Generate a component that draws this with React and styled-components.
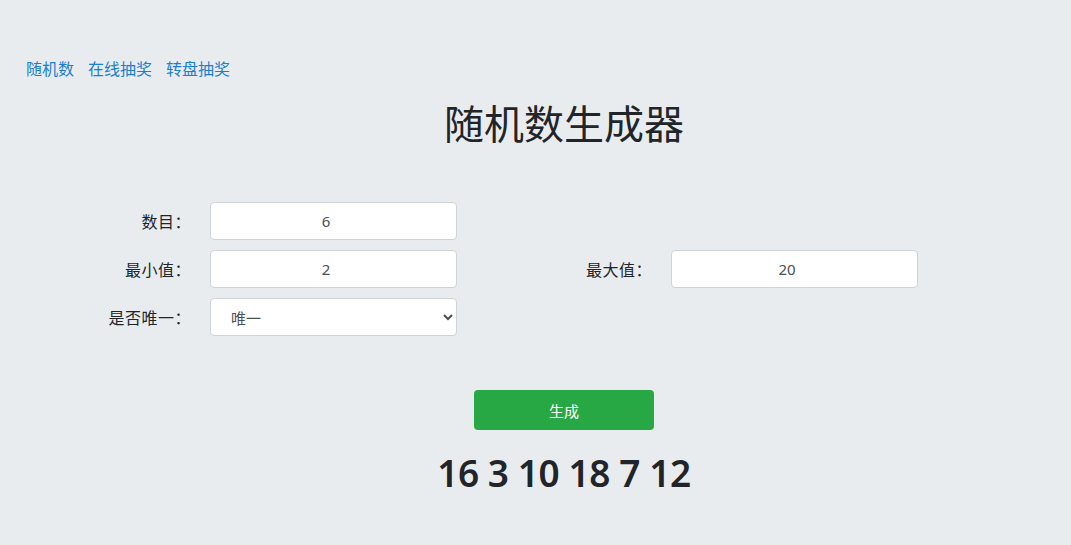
import React, { useState } from 'react';
import styled, { createGlobalStyle } from 'styled-components';

const GlobalStyle = createGlobalStyle`
    html, body {
        margin: 0;
        padding: 0;
        background: #e9ecef;
    }
    body {
        font-family: "Noto Sans", "Noto Sans CJK SC", sans-serif;
        color: #212529;
        font-size: 15px;
    }
`

const Page = styled.div`
    padding-top: 57px;
`

const Nav = styled.nav`
    display: flex;
    gap: 14px;
    padding-left: 26px;
    a {
        color: #1a7fd0;
        text-decoration: none;
        font-size: 16px;
        line-height: 22px;
        font-family: "Noto Sans CJK SC", sans-serif;
    }
`

const Title = styled.h1`
    margin: 13px 0 0;
    text-align: center;
    font-weight: 400;
    font-size: 40px;
    line-height: 60px;
    font-family: "Noto Sans CJK SC", sans-serif;
    color: #212529;
    padding-left: 57px;
`

const Form = styled.div`
    margin-top: 50px;
    display: grid;
    grid-template-columns: 195px 277px 184px 277px;
    row-gap: 10px;
`

const Label = styled.label`
    padding: 0 4px 0 0;
    text-align: right;
    line-height: 38px;
    font-size: 16px;
    letter-spacing: 0.5px;
    font-family: "Noto Sans CJK SC", sans-serif;
    color: #212529;
`

const Cell = styled.div`
    padding: 0 15px;
`

const Input = styled.input`
    box-sizing: border-box;
    width: 100%;
    height: 38px;
    border: 1px solid #ced4da;
    border-radius: 4px;
    background: #fff;
    padding: 0 15px 0 0;
    text-align: center;
    font-size: 15px;
    font-family: "Noto Sans", sans-serif;
    color: #495057;
    outline: none;
`

const Select = styled.select`
    box-sizing: border-box;
    width: 100%;
    height: 38px;
    border: 1px solid #ced4da;
    border-radius: 4px;
    background: #fff;
    padding: 0 16px;
    font-size: 15px;
    font-family: "Noto Sans CJK SC", sans-serif;
    color: #495057;
`

const Empty = styled.div``

const Actions = styled.div`
    margin-top: 54px;
    display: flex;
    flex-direction: column;
    align-items: center;
    padding-left: 57px;
`

const Button = styled.button`
    width: 180px;
    height: 40px;
    border: none;
    border-radius: 4px;
    background: #28a745;
    color: #fff;
    font-size: 15px;
    font-family: "Noto Sans CJK SC", sans-serif;
    cursor: pointer;
`

const Result = styled.div`
    margin-top: 18px;
    font-size: 37px;
    font-weight: 600;
    font-family: "Noto Sans", sans-serif;
    color: #212529;
    letter-spacing: -0.4px;
    line-height: 50px;
`

export default function App() {
    const [count, setCount] = useState('6');
    const [min, setMin] = useState('2');
    const [max, setMax] = useState('20');

    return (
        <Page>
            <GlobalStyle />
            <Nav>
                <a href="#">随机数</a>
                <a href="#">在线抽奖</a>
                <a href="#">转盘抽奖</a>
            </Nav>
            <Title>随机数生成器</Title>
            <Form>
                <Label>数目：</Label>
                <Cell><Input value={count} onChange={e => setCount(e.target.value)} /></Cell>
                <Empty />
                <Empty />

                <Label>最小值：</Label>
                <Cell><Input value={min} onChange={e => setMin(e.target.value)} /></Cell>
                <Label>最大值：</Label>
                <Cell><Input value={max} onChange={e => setMax(e.target.value)} /></Cell>

                <Label>是否唯一：</Label>
                <Cell>
                    <Select defaultValue="1">
                        <option value="1">唯一</option>
                        <option value="0">不唯一</option>
                    </Select>
                </Cell>
            </Form>
            <Actions>
                <Button>生成</Button>
                <Result>16 3 10 18 7 12</Result>
            </Actions>
        </Page>
    );
}
